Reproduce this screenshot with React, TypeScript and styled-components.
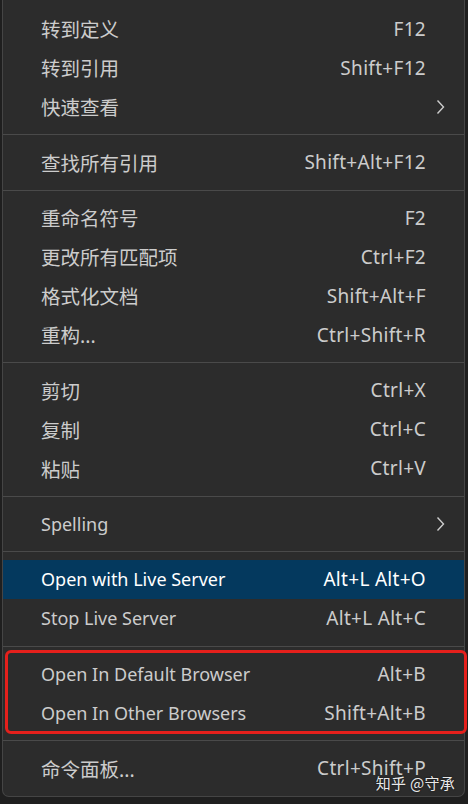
import React from 'react'
import styled, { createGlobalStyle } from 'styled-components'

const GlobalStyle = createGlobalStyle`
  html, body {
    margin: 0;
    padding: 0;
    background: #1f1f1f;
  }
  body {
    width: 468px;
    height: 804px;
    overflow: hidden;
  }
`

const Page = styled.div`
  width: 468px;
  height: 804px;
  padding: 0 3px 0 2px;
  box-sizing: border-box;
  background: #1f1f1f;
`

const Menu = styled.div`
  position: relative;
  box-sizing: border-box;
  height: 797px;
  padding: 9px 0 0;
  background: #2c2c2c;
  border: 1px solid #454545;
  border-top: none;
  border-radius: 0 0 7px 7px;
  font-family: 'Noto Sans', 'Noto Sans CJK SC', sans-serif;
  font-size: 18px;
  color: #cccccc;
`

const Row = styled.div<{ $active?: boolean }>`
  display: grid;
  grid-template-columns: 1fr auto 18px;
  align-items: center;
  height: 39px;
  padding: 0 19px 0 38px;
  background: ${({ $active }) => ($active ? '#04395e' : 'transparent')};
  color: ${({ $active }) => ($active ? '#ffffff' : '#cccccc')};
`

const Label = styled.span<{ $cjk?: boolean }>`
  white-space: nowrap;
  font-size: ${({ $cjk }) => ($cjk ? '19.5px' : '18px')};
`

const Keys = styled.span`
  white-space: nowrap;
  text-align: right;
  font-size: 19px;
  letter-spacing: 0.3px;
  margin-right: 1px;
`

const Arrow = styled.span`
  display: flex;
  justify-content: flex-end;
  grid-column: 3;
`

const Separator = styled.div`
  height: 1px;
  margin: 8px 0 7.5px;
  background: #4a4a4a;
`

const Group = styled.div`
  position: relative;

  &::after {
    content: '';
    position: absolute;
    left: 2px;
    right: -3px;
    top: -4px;
    bottom: -2px;
    border: 3px solid #e5201c;
    border-radius: 6px;
    pointer-events: none;
  }
`

const Watermark = styled.div`
  position: absolute;
  right: 9px;
  bottom: 3px;
  font-family: 'Noto Sans CJK SC', sans-serif;
  font-size: 15px;
  color: rgba(255, 255, 255, 0.92);
  text-shadow: 0 0 2px rgba(0, 0, 0, 0.6);
  letter-spacing: 0.3px;
`

const Chevron = () => (
  <svg width="9" height="16" viewBox="0 0 9 16">
    <polyline points="1.5,1.5 7.5,8 1.5,14.5" fill="none" stroke="#cccccc" strokeWidth="1.4" />
  </svg>
)

type Item = { label: string; keys?: string; sub?: boolean; active?: boolean }

const sections: Item[][] = [
  [
    { label: '转到定义', keys: 'F12' },
    { label: '转到引用', keys: 'Shift+F12' },
    { label: '快速查看', sub: true },
  ],
  [{ label: '查找所有引用', keys: 'Shift+Alt+F12' }],
  [
    { label: '重命名符号', keys: 'F2' },
    { label: '更改所有匹配项', keys: 'Ctrl+F2' },
    { label: '格式化文档', keys: 'Shift+Alt+F' },
    { label: '重构...', keys: 'Ctrl+Shift+R' },
  ],
  [
    { label: '剪切', keys: 'Ctrl+X' },
    { label: '复制', keys: 'Ctrl+C' },
    { label: '粘贴', keys: 'Ctrl+V' },
  ],
  [{ label: 'Spelling', sub: true }],
  [
    { label: 'Open with Live Server', keys: 'Alt+L Alt+O', active: true },
    { label: 'Stop Live Server', keys: 'Alt+L Alt+C' },
  ],
  [
    { label: 'Open In Default Browser', keys: 'Alt+B' },
    { label: 'Open In Other Browsers', keys: 'Shift+Alt+B' },
  ],
  [{ label: '命令面板...', keys: 'Ctrl+Shift+P' }],
]

const isCjk = (s: string) => /[\u4e00-\u9fff]/.test(s)

const renderRow = (item: Item) => (
  <Row key={item.label} $active={item.active}>
    <Label $cjk={isCjk(item.label)}>{item.label}</Label>
    {item.keys && <Keys>{item.keys}</Keys>}
    {item.sub && (
      <Arrow>
        <Chevron />
      </Arrow>
    )}
  </Row>
)

const App = () => {
  return (
    <Page>
      <GlobalStyle />
      <Menu>
        {sections.map((items, i) => (
          <React.Fragment key={i}>
            {i > 0 && <Separator />}
            {i === 6 ? <Group>{items.map(renderRow)}</Group> : items.map(renderRow)}
          </React.Fragment>
        ))}
        <Watermark>知乎 @守承</Watermark>
      </Menu>
    </Page>
  )
}

export default App
